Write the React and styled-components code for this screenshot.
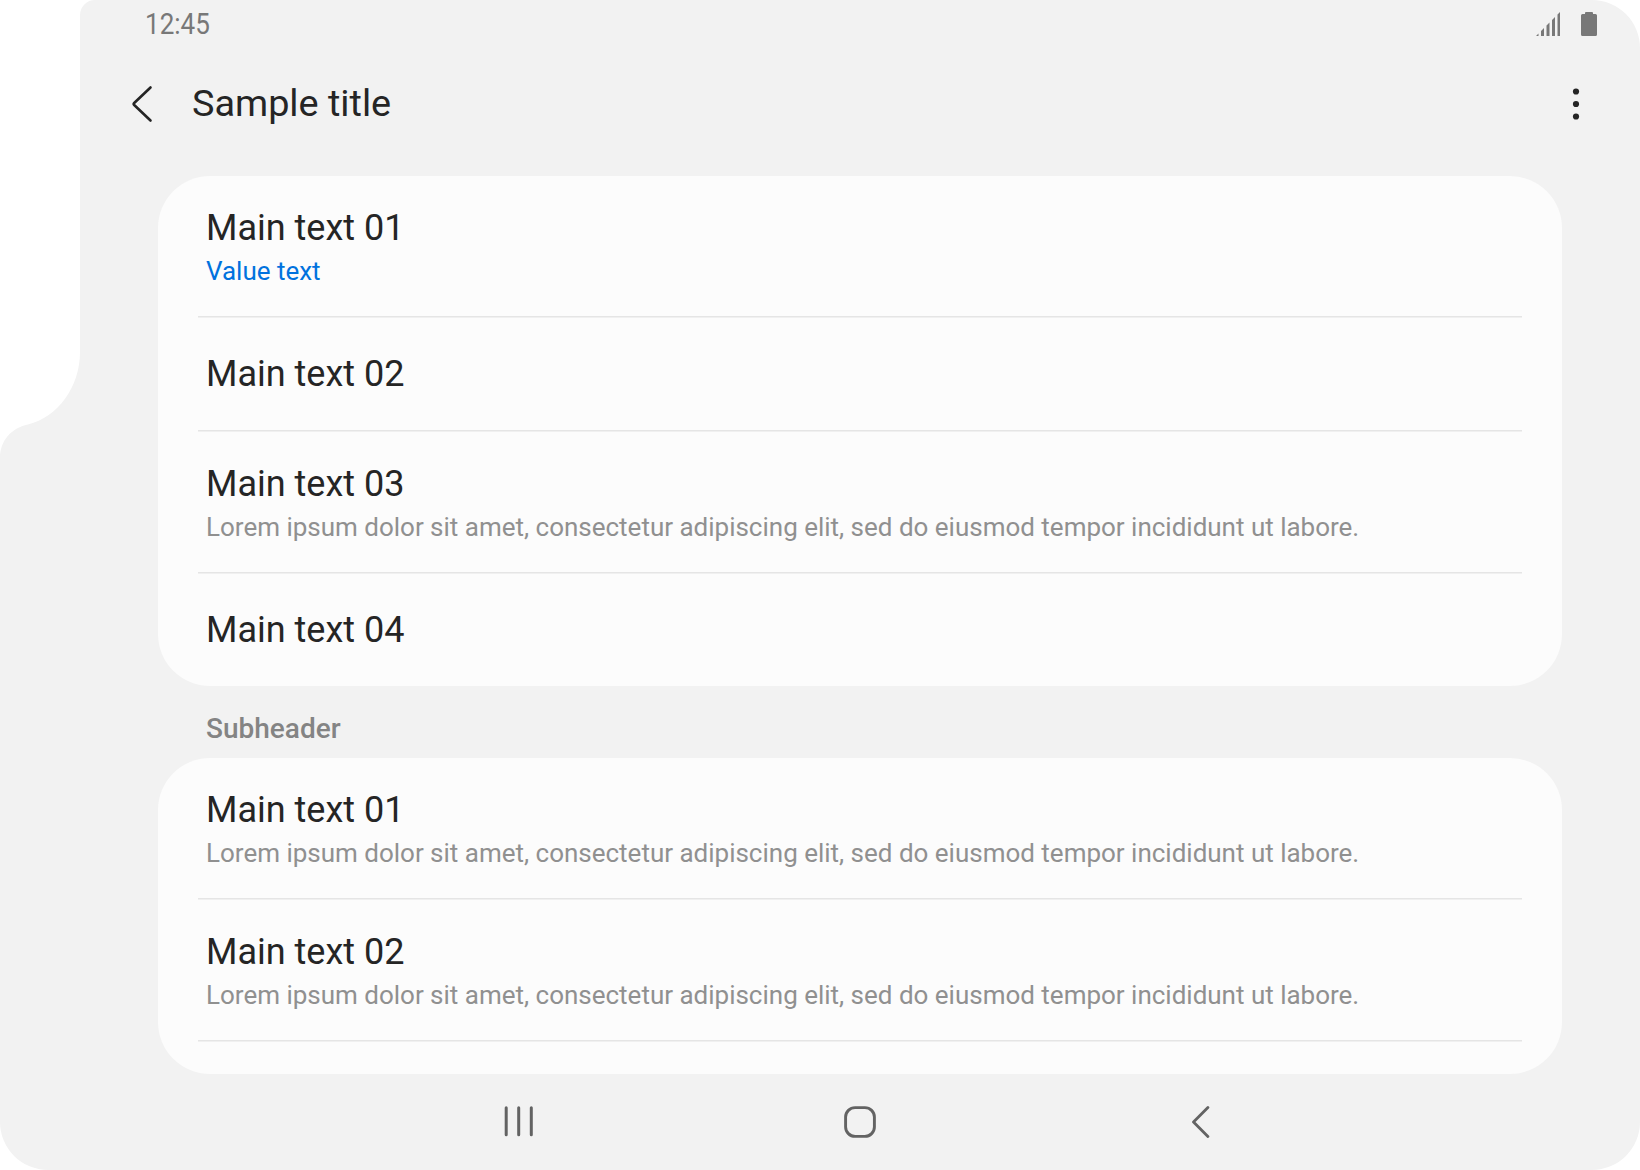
import React from "react";
import styled, { createGlobalStyle } from "styled-components";

const GlobalStyle = createGlobalStyle`
  * { box-sizing: border-box; }
  body { margin: 0; background: #fff; }
`;

const Screen = styled.div`
  width: 1640px;
  height: 1170px;
  display: flex;
  flex-direction: column;
  background: #f2f2f2;
  font-family: Roboto, "Liberation Sans", sans-serif;
  color: #252525;
  overflow: hidden;
  clip-path: path("M95 0H1592A48 48 0 0 1 1640 48V1122A48 48 0 0 1 1592 1170H48A48 48 0 0 1 0 1122V458C0 441 11 428 28 424.500C58 417 80 387 80 352V15A15 15 0 0 1 95 0Z");
`;

const StatusBar = styled.header`
  height: 48px;
  padding: 0 43px 0 145px;
  display: flex;
  align-items: center;
  justify-content: space-between;
  color: #787878;
`;

const Clock = styled.span`
  font-size: 30px;
  line-height: 48px;
  transform: scaleX(0.868);
  transform-origin: left center;
`;

const StatusIcons = styled.div`
  display: flex;
  gap: 21px;
`;

const AppBar = styled.div`
  height: 112px;
  padding: 0 60px 0 130px;
  display: flex;
  align-items: center;
`;

const Title = styled.h1`
  margin: 0 auto 2px 38px;
  font-size: 37.8px;
  line-height: 48px;
  font-weight: 400;
`;

const IconButton = styled.button`
  display: flex;
  padding: 0;
  border: 0;
  background: none;
  color: inherit;
`;

const Content = styled.main`
  height: 914px;
  padding: 16px 78px 0 158px;
  display: flex;
  flex-direction: column;
  overflow: hidden;
`;

const Card = styled.ul`
  flex: none;
  height: ${(p) => p.$height}px;
  margin: 0;
  padding: 0 40px;
  list-style: none;
  background: #fcfcfc;
  border-radius: 52px;
  overflow: hidden;
`;

const Row = styled.li`
  height: ${(p) => (p.$double ? 142 : 114)}px;
  padding: ${(p) => (p.$double ? 28 : 32)}px 8px 0;
  border-bottom: ${(p) => (p.$last ? "0" : "1px solid #f0f0f0")};
  box-shadow: ${(p) => (p.$last ? "none" : "inset 0 -1px 0 #e5e5e5")};
`;

const MainText = styled.div`
  font-size: 36px;
  line-height: 48px;
`;

const SubText = styled.div`
  font-size: 26px;
  line-height: 38px;
  letter-spacing: -0.008px;
  white-space: nowrap;
  color: ${(p) => (p.$value ? "#0072de" : "#909090")};
`;

const Subheader = styled.h2`
  flex: none;
  height: 72px;
  margin: 0;
  padding: 0 48px;
  font-size: 28px;
  line-height: 85px;
  font-weight: 500;
  color: #848484;
`;

const NavBar = styled.nav`
  height: 96px;
  padding: 0 428px 0 504px;
  display: flex;
  align-items: center;
  justify-content: space-between;
  color: #636363;
`;

const HomeButton = styled(IconButton)`
  margin-left: -4px;
`;

const LOREM =
  "Lorem ipsum dolor sit amet, consectetur adipiscing elit, sed do eiusmod tempor incididunt ut labore.";

const firstGroup = [
  { title: "Main text 01", sub: "Value text", value: true },
  { title: "Main text 02" },
  { title: "Main text 03", sub: LOREM },
  { title: "Main text 04" },
];

const secondGroup = [
  { title: "Main text 01", sub: LOREM },
  { title: "Main text 02", sub: LOREM },
];

function Group({ items, height, closed }) {
  return (
    <Card $height={height}>
      {items.map((item, i) => (
        <Row key={item.title} $double={!!item.sub} $last={closed && i === items.length - 1}>
          <MainText>{item.title}</MainText>
          {item.sub && <SubText $value={item.value}>{item.sub}</SubText>}
        </Row>
      ))}
    </Card>
  );
}

const SignalIcon = () => (
  <svg width="24" height="24" viewBox="0 0 24 24" fill="currentColor">
    <path d="M0 24L2.500 21.500V24ZM5 24V19L8 16V24ZM10.500 24V13.500L13.500 10.500V24ZM16 24V8L19 5V24ZM21.500 24V2.500L24 0V24Z" />
  </svg>
);

const BatteryIcon = () => (
  <svg width="16" height="24" viewBox="0 0 16 24" fill="currentColor">
    <path d="M5 0H11Q12 0 12 1V2H14.500Q16 2 16 3.500V22.500Q16 24 14.500 24H1.500Q0 24 0 22.500V3.500Q0 2 1.500 2H4V1Q4 0 5 0Z" />
  </svg>
);

const BackIcon = () => (
  <svg width="24" height="40" viewBox="0 0 24 40" fill="none" stroke="currentColor" strokeWidth="2.600" strokeLinecap="round" strokeLinejoin="round">
    <path d="M20.500 3.500L4.200 19Q3.200 20 4.200 21L20.500 36.500" />
  </svg>
);

const MoreIcon = () => (
  <svg width="8" height="34" viewBox="0 0 8 34" fill="currentColor">
    <circle cx="4" cy="4.500" r="3.100" />
    <circle cx="4" cy="17" r="3.100" />
    <circle cx="4" cy="29.500" r="3.100" />
  </svg>
);

const RecentsIcon = () => (
  <svg width="30" height="32" viewBox="0 0 30 32" fill="none" stroke="currentColor" strokeWidth="3" strokeLinecap="round">
    <path d="M2.200 1.700V28.700M14.700 1.700V28.700M27.300 1.700V28.700" />
  </svg>
);

const HomeIcon = () => (
  <svg width="32" height="32" viewBox="0 0 32 32" fill="none" stroke="currentColor" strokeWidth="2.900">
    <rect x="1.600" y="1.600" width="28.800" height="28.800" rx="9.500" />
  </svg>
);

const NavBackIcon = () => (
  <svg width="22" height="32" viewBox="0 0 22 32" fill="none" stroke="currentColor" strokeWidth="2.800" strokeLinecap="round" strokeLinejoin="round">
    <path d="M17.900 1.500L3.500 16L17.900 30.500" />
  </svg>
);

export default function App() {
  return (
    <>
      <GlobalStyle />
      <Screen>
        <StatusBar>
          <Clock>12:45</Clock>
          <StatusIcons>
            <SignalIcon />
            <BatteryIcon />
          </StatusIcons>
        </StatusBar>
        <AppBar>
          <IconButton aria-label="Back"><BackIcon /></IconButton>
          <Title>Sample title</Title>
          <IconButton aria-label="More options"><MoreIcon /></IconButton>
        </AppBar>
        <Content>
          <Group items={firstGroup} height={510} closed />
          <Subheader>Subheader</Subheader>
          <Group items={secondGroup} height={316} />
        </Content>
        <NavBar>
          <IconButton aria-label="Recent apps"><RecentsIcon /></IconButton>
          <HomeButton aria-label="Home"><HomeIcon /></HomeButton>
          <IconButton aria-label="Back"><NavBackIcon /></IconButton>
        </NavBar>
      </Screen>
    </>
  );
}
